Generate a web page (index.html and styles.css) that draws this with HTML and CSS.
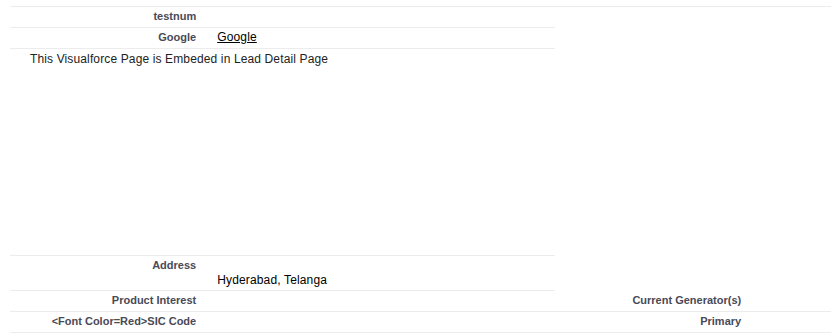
FILE: index.html
```html
<!DOCTYPE html>
<html lang="en">
<head>
    <meta charset="UTF-8">
    <title>Lead Detail</title>
    <link rel="stylesheet" href="styles.css">
</head>
<body>
    <div class="topEdge"></div>
    <table class="detailList">
        <colgroup>
            <col class="colLabel">
            <col class="colData">
            <col class="colLabel">
            <col class="colData">
        </colgroup>
        <tr>
            <td class="labelCol">testnum</td>
            <td class="dataCol"></td>
            <td class="empty"></td>
            <td class="empty"></td>
        </tr>
        <tr>
            <td class="labelCol">Google</td>
            <td class="dataCol"><a href="#">Google</a></td>
            <td class="empty"></td>
            <td class="empty"></td>
        </tr>
        <tr>
            <td class="embedCol" colspan="2">
                <div class="vfPage">This Visualforce Page is Embeded in Lead Detail Page</div>
            </td>
            <td class="empty"></td>
            <td class="empty"></td>
        </tr>
        <tr>
            <td class="labelCol">Address</td>
            <td class="dataCol address"><br>Hyderabad, Telanga</td>
            <td class="empty"></td>
            <td class="empty"></td>
        </tr>
        <tr>
            <td class="labelCol">Product Interest</td>
            <td class="dataCol"></td>
            <td class="labelCol">Current Generator(s)</td>
            <td class="dataCol"></td>
        </tr>
        <tr>
            <td class="labelCol">&lt;Font Color=Red&gt;SIC Code</td>
            <td class="dataCol"></td>
            <td class="labelCol">Primary</td>
            <td class="dataCol"></td>
        </tr>
    </table>
</body>
</html>
```

FILE: styles.css
```css
body {
    margin: 0;
    padding-left: 10px;
    background-color: #fff;
    font-family: Arial, "Liberation Sans", sans-serif;
    color: #222;
    overflow: hidden;
}
.topEdge {
    width: 1090px;
    height: 6px;
    border-bottom: 1px solid #ececec;
}
.detailList {
    width: 1090px;
    table-layout: fixed;
    border-collapse: collapse;
    border-spacing: 0;
}
.colLabel {
    width: 18%;
}
.colData {
    width: 32%;
}
.detailList td {
    padding: 2px 10px 4px 2px;
    line-height: 14px;
    vertical-align: top;
}
.labelCol {
    font-size: 11px;
    font-weight: bold;
    color: #4a4a56;
    text-align: right;
    border-bottom: 1px solid #ececec;
}
.dataCol {
    font-size: 12px;
    letter-spacing: 0.15px;
    color: #000;
    text-align: left;
    border-bottom: 1px solid #ececec;
}
.detailList td.dataCol {
    padding-left: 11px;
}
.detailList td.address {
    padding-top: 3px;
    padding-bottom: 3px;
}
.dataCol a {
    color: #000;
    text-decoration: underline;
}
.detailList td.empty {
    border-bottom: none;
}
.detailList td.embedCol {
    padding: 0;
    height: 206px;
    border-bottom: 1px solid #ececec;
}
.vfPage {
    padding: 3px 0 0 20px;
    font-size: 12px;
    letter-spacing: 0.13px;
    line-height: 14px;
    color: #222;
}
```
